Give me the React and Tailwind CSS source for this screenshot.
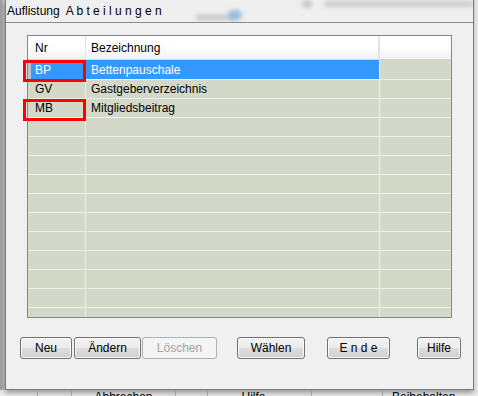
import React from 'react';

const rows = [
    { nr: 'BP', name: 'Bettenpauschale', selected: true },
    { nr: 'GV', name: 'Gastgeberverzeichnis' },
    { nr: 'MB', name: 'Mitgliedsbeitrag' },
];

function Button({ label, width, disabled, className = '' }) {
    const base = 'h-[22px] rounded-[3px] border text-[12px] leading-none flex items-center justify-center whitespace-pre';
    const look = disabled
        ? 'border-[#adb2b5] bg-[#f4f4f4] text-[#a3a3a3]'
        : 'border-[#707070] bg-[linear-gradient(to_bottom,#f2f2f2_0%,#ebebeb_50%,#dddddd_50%,#cfcfcf_100%)] shadow-[inset_0_0_0_1px_#fbfbfb] text-black';
    return (
        <button type="button" className={`${base} ${look} ${className}`} style={{ width }}>
            {label}
        </button>
    );
}

export default function App() {
    const list = [...rows];
    while (list.length < 15) list.push({ nr: '', name: '' });

    return (
        <div className="relative w-[478px] h-[396px] overflow-hidden bg-[#e6e6e6] font-['Liberation_Sans',Arial,sans-serif] text-[12px] text-black">
            <div className="flex h-[390px]">
                <div className="w-[5px] bg-gradient-to-r from-[#9c9c9c] to-[#cfcfcf]" />

                {/* dialog window */}
                <div className="w-[469px] flex flex-col border-l border-r border-b border-[#7b7b7b] bg-[#f0f0f0] shadow-[0_2px_6px_rgba(0,0,0,0.45)]">
                    <div className="relative h-[23px] border-b border-[#8c8c8c] bg-[#efefef] overflow-hidden">
                        <div className="absolute left-[190px] top-[15px] w-[40px] h-[5px] rounded bg-[#c4c4c4] blur-[2px]" />
                        <div className="absolute left-[222px] top-[10px] w-[14px] h-[10px] rounded-full bg-[#9dbde0] blur-[2px]" />
                        <div className="absolute left-[296px] top-[0px] w-[10px] h-[8px] rounded-full bg-[#c8c8c8] blur-[2px]" />
                        <div className="absolute left-[318px] top-[1px] w-[150px] h-[6px] rounded bg-[#cdcdcd] blur-[2px]" />
                        <div className="relative pl-[1px] pt-[4px] leading-[14px] whitespace-pre">Auflistung  A b t e i l u n g e n</div>
                    </div>

                    <div className="flex-1 flex flex-col pt-[12px] pl-[21px]">
                        {/* list */}
                        <div className="w-[425px] h-[283px] border border-[#828790] bg-[#d4d8c9] overflow-hidden">
                            <div className="flex h-[24px] border-b border-[#d5d5d5] bg-gradient-to-b from-white from-40% to-[#f1f2f4]">
                                <div className="w-[58px] border-r border-[#e2e3e5] pl-[7px] flex items-center">Nr</div>
                                <div className="w-[294px] border-r-2 border-[#e2e3e5] pl-[5px] flex items-center">Bezeichnung</div>
                                <div className="flex-1" />
                            </div>
                            {list.map((r, i) => (
                                <div key={i} className={`flex border-b border-[#eeeeee] ${i === 0 ? 'h-[20px]' : 'h-[19px]'}`}>
                                    <div className={`w-[58px] border-r border-[#eeeeee] pl-[7px] flex items-center ${r.selected ? 'bg-[#3399ff] text-white shadow-[inset_3px_0_0_#b9c6d3]' : ''}`}>{r.nr}</div>
                                    <div className={`w-[294px] border-r border-[#eeeeee] pl-[5px] flex items-center ${r.selected ? 'bg-[#3399ff] text-white' : ''}`}>{r.name}</div>
                                    <div className="flex-1" />
                                </div>
                            ))}
                        </div>

                        <div className="flex mt-[19px] -ml-[7px]">
                            <Button label="Neu" width={52} />
                            <Button label="Ändern" width={67} className="ml-[2px]" />
                            <Button label="Löschen" width={75} disabled className="ml-[1px]" />
                            <Button label="Wählen" width={68} className="ml-[20px]" />
                            <Button label="E n d e" width={63} className="ml-[22px]" />
                            <Button label="Hilfe" width={44} className="ml-[27px]" />
                        </div>
                    </div>
                </div>

                <div className="flex-1 bg-gradient-to-r from-[#cfcfcf] to-[#ececec]" />
            </div>

            {/* background window peeking out below */}
            <div className="flex h-[6px] overflow-hidden bg-[#ececec] leading-[14px]">
                <div className="w-[38px] border-r border-[#a0a0a0]" />
                <div className="w-[34px] border-r border-[#a0a0a0]" />
                <div className="w-[104px] border-r border-[#a0a0a0] text-center">Abbrechen</div>
                <div className="w-[32px] border-r border-[#a0a0a0]" />
                <div className="w-[104px] border-r border-[#a0a0a0] text-center pr-[12px]">Hilfe</div>
                <div className="w-[71px] border-r border-[#a0a0a0]" />
                <div className="flex-1 pl-[9px] whitespace-nowrap">Beibehalten</div>
            </div>

            {/* red marker boxes */}
            <div className="absolute left-[23px] top-[60px] w-[63px] h-[22px] border-[3px] border-[#ff0000]" />
            <div className="absolute left-[23px] top-[99px] w-[63px] h-[22px] border-[3px] border-[#ff0000]" />
        </div>
    );
}
